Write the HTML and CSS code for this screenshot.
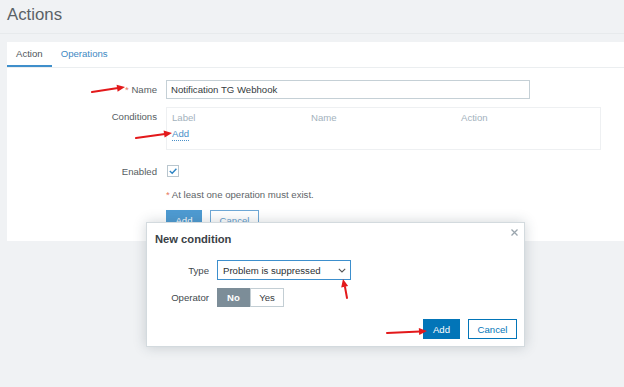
FILE: index.html
```html
<!DOCTYPE html>
<html lang="en">
<head>
  <meta charset="UTF-8">
  <title>Actions</title>
  <link rel="stylesheet" href="styles.css">
</head>
<body>
  <header class="page-header">
    <h1>Actions</h1>
  </header>

  <main class="panel">
    <nav class="tabs">
      <a class="tab active">Action</a>
      <a class="tab">Operations</a>
    </nav>

    <form class="form">
      <div class="row row-name">
        <label class="label"><span class="req">*</span> Name</label>
        <input class="text-input" type="text" value="Notification TG Webhook">
      </div>

      <div class="row row-conditions">
        <label class="label label-top">Conditions</label>
        <div class="cond-box">
          <div class="cond-head">
            <span>Label</span>
            <span>Name</span>
            <span>Action</span>
          </div>
          <a class="link">Add</a>
        </div>
      </div>

      <div class="row row-enabled">
        <label class="label">Enabled</label>
        <span class="checkbox">
          <svg width="10" height="10" viewBox="0 0 10 10"><path d="M1.8 5 L4.2 7.3 L8.4 2.8" fill="none" stroke="#2d84c4" stroke-width="1.4"/></svg>
        </span>
      </div>

      <div class="row row-warning">
        <span class="label"></span>
        <p class="warning"><span class="req">*</span> At least one operation must exist.</p>
      </div>

      <div class="row row-buttons">
        <span class="label"></span>
        <div class="buttons">
          <button type="button" class="btn btn-primary faded">Add</button>
          <button type="button" class="btn btn-alt faded">Cancel</button>
        </div>
      </div>
    </form>
  </main>

  <div class="dialog">
    <h2 class="dialog-title">New condition</h2>
    <span class="dialog-close">
      <svg width="7" height="7" viewBox="0 0 7 7"><path d="M0.5 0.5 L6.5 6.5 M6.5 0.5 L0.5 6.5" stroke="#9aa5ad" stroke-width="1.3"/></svg>
    </span>

    <div class="dialog-row">
      <label class="dialog-label">Type</label>
      <div class="select">
        <span>Problem is suppressed</span>
        <svg width="8" height="5" viewBox="0 0 8 5"><path d="M0.8 0.8 L4 4 L7.2 0.8" fill="none" stroke="#555" stroke-width="1.1"/></svg>
      </div>
    </div>

    <div class="dialog-row">
      <label class="dialog-label">Operator</label>
      <div class="toggle">
        <span class="toggle-item on">No</span>
        <span class="toggle-item">Yes</span>
      </div>
    </div>

    <div class="dialog-footer">
      <button type="button" class="btn btn-primary">Add</button>
      <button type="button" class="btn btn-alt">Cancel</button>
    </div>
  </div>

  <!-- red annotation arrows drawn over the screenshot -->
  <svg class="annotations" width="624" height="387" viewBox="0 0 624 387">
    <g stroke="#e3191b" stroke-width="2" fill="none" stroke-linecap="round">
      <line x1="92" y1="92" x2="118" y2="88"/>
      <line x1="136" y1="138" x2="165" y2="134"/>
      <line x1="347" y1="298" x2="345" y2="287"/>
      <line x1="387" y1="333" x2="420" y2="331.5"/>
    </g>
    <g fill="#e3191b">
      <polygon points="125,87 117.6,91.7 116.6,84.7"/>
      <polygon points="172,133 164.6,137.6 163.6,130.6"/>
      <polygon points="343,279 348.1,286.1 341.2,287.5"/>
      <polygon points="427,331 419.2,334.9 418.8,327.9"/>
    </g>
  </svg>
</body>
</html>
```

FILE: styles.css
```css
* {
  margin: 0;
  padding: 0;
  box-sizing: border-box;
}

body {
  font-family: 'Liberation Sans', Arial, sans-serif;
  font-size: 9.6px;
  color: #3d4448;
  background-color: #f0f2f4;
  width: 624px;
  height: 387px;
  overflow: hidden;
  position: relative;
}

.page-header {
  padding: 5px 7px 8px;
  border-bottom: 1px solid #e7eaec;
  margin-bottom: 8px;
}

.page-header h1 {
  font-size: 16.8px;
  line-height: 20px;
  font-weight: normal;
  color: #5a6166;
}

.panel {
  margin-left: 7px;
  height: 199px;
  background-color: #fff;
}

/* tabs */
.tabs {
  display: flex;
  height: 26px;
  border-bottom: 1px solid #ebeef0;
}

.tab {
  display: flex;
  align-items: center;
  height: 25px;
  padding: 0 9px;
  color: #4189c3;
  border-bottom: 2px solid transparent;
}

.tab.active {
  color: #4f565b;
  border-bottom-color: #3f8fcb;
}

/* form */
.form {
  padding-top: 12px;
}

.row {
  display: flex;
  align-items: center;
  gap: 9px;
}

.label {
  width: 150px;
  flex-shrink: 0;
  text-align: right;
  color: #565d62;
}

.req {
  color: #e6775a;
}

.row-name {
  height: 19px;
}

.text-input {
  width: 364px;
  height: 19px;
  border: 1px solid #c5d0d6;
  padding: 0 4px;
  font-family: inherit;
  font-size: 9.6px;
  color: #353b3e;
}

.row-conditions {
  margin-top: 8px;
  align-items: flex-start;
}

.label-top {
  padding-top: 3px;
  line-height: 14px;
}

.cond-box {
  width: 435px;
  height: 43px;
  border: 1px solid #eef0f2;
  padding: 3px 5px 0;
}

.cond-head {
  display: grid;
  grid-template-columns: 139px 150px 1fr;
  line-height: 14px;
  color: #a3b2bd;
}

.link {
  display: inline-block;
  margin-top: 3px;
  line-height: 12px;
  color: #4a90c8;
  border-bottom: 1px dotted #4a90c8;
}

.row-enabled {
  margin-top: 15px;
  height: 12px;
}

.checkbox {
  display: flex;
  align-items: center;
  justify-content: center;
  width: 12px;
  height: 12px;
  margin-left: 1px;
  border: 1px solid #b9c6ce;
}

.row-warning {
  margin-top: 12px;
}

.warning {
  line-height: 12px;
  color: #5e6569;
}

.row-buttons {
  margin-top: 9px;
}

.buttons {
  display: flex;
  gap: 8px;
}

.btn {
  height: 20px;
  padding: 0 8px;
  font-family: inherit;
  font-size: 9.6px;
  border: 1px solid #0275b8;
}

.btn-primary {
  background-color: #0275b8;
  color: #fff;
  min-width: 37px;
}

.btn-alt {
  background-color: #fff;
  color: #0275b8;
  min-width: 49px;
}

.btn-primary.faded {
  background-color: #4e9bd2;
  border-color: #4e9bd2;
  min-width: 36px;
}

.btn-alt.faded {
  border-color: #6fa8d6;
  color: #5f9bcb;
}

/* dialog */
.dialog {
  position: absolute;
  left: 146px;
  top: 222px;
  width: 379px;
  height: 125px;
  background-color: #fff;
  border: 1px solid #d3dade;
  box-shadow: 0 0 12px rgba(40, 60, 75, 0.22);
  padding: 8px 7px 0 8px;
}

.dialog-title {
  font-size: 11.2px;
  line-height: 16px;
  font-weight: bold;
  color: #3a4146;
}

.dialog-close {
  position: absolute;
  right: 6px;
  top: 6px;
  line-height: 0;
}

.dialog-row {
  display: flex;
  align-items: center;
  gap: 8px;
  margin-left: -8px;
}

.dialog-row + .dialog-row {
  margin-top: 8px;
}

.dialog-title + .dialog-close + .dialog-row {
  margin-top: 13px;
}

.dialog-label {
  width: 62px;
  text-align: right;
  color: #42494e;
}

.select {
  display: flex;
  align-items: center;
  justify-content: space-between;
  width: 134px;
  height: 20px;
  padding: 0 4px 0 5px;
  border: 1px solid #3d8fcd;
  color: #2b3033;
}

.toggle {
  display: flex;
  height: 19px;
}

.toggle-item {
  display: flex;
  align-items: center;
  justify-content: center;
  width: 34px;
  border: 1px solid #c3ced4;
  color: #3a4043;
}

.toggle-item.on {
  width: 33px;
  background-color: #7c8d98;
  border-color: #7c8d98;
  color: #fff;
  font-weight: bold;
}

.dialog-footer {
  display: flex;
  justify-content: flex-end;
  gap: 8px;
  margin-top: 12px;
}

.annotations {
  position: absolute;
  left: 0;
  top: 0;
  pointer-events: none;
}
```
